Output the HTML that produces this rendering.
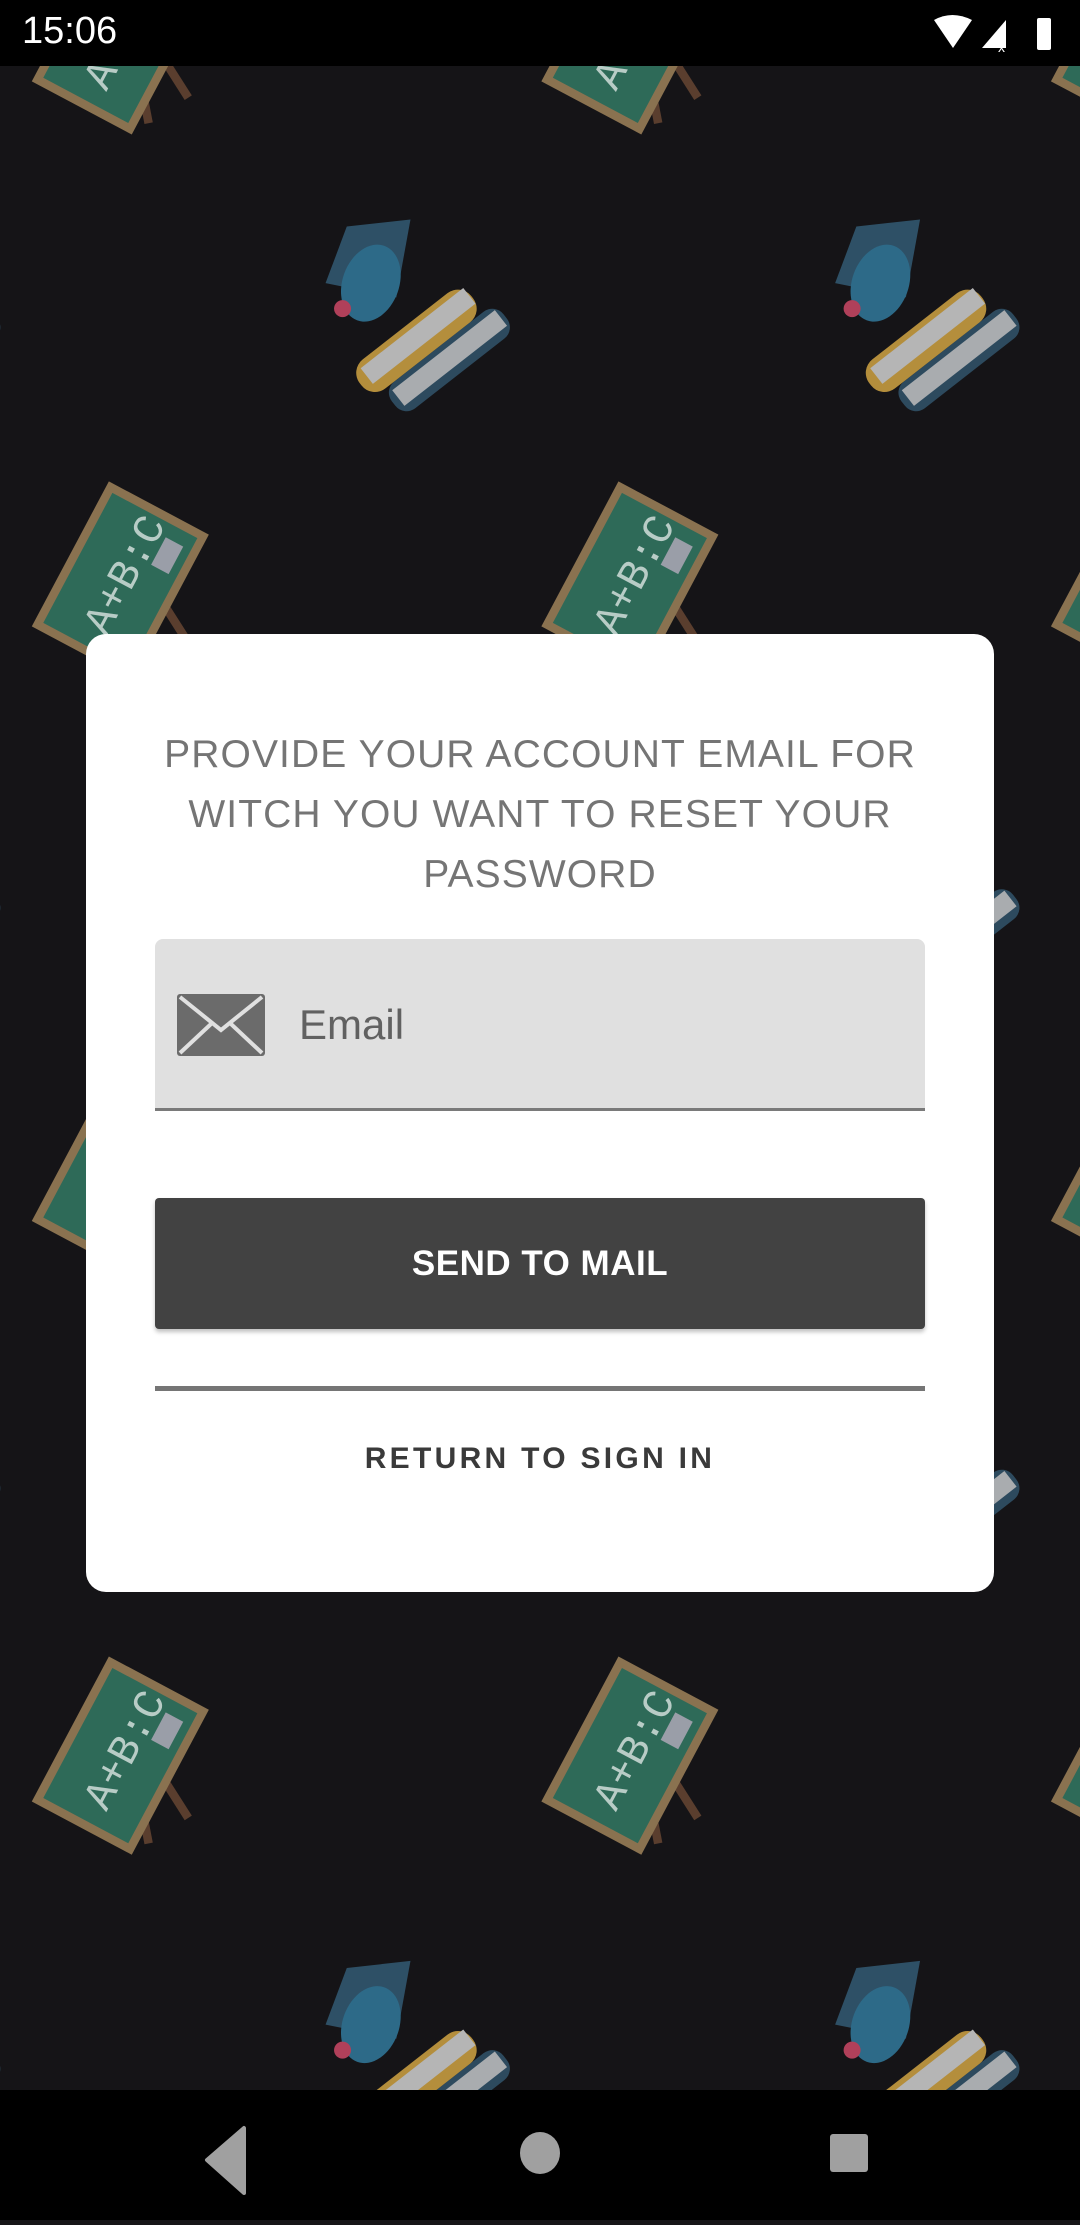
<!DOCTYPE html>
<html><head><meta charset="utf-8"><style>
html,body{margin:0;padding:0}
body{width:1080px;height:2220px;position:relative;overflow:hidden;background:#151417;font-family:"Liberation Sans",sans-serif}
#bg{position:absolute;left:0;top:0;width:1080px;height:2220px}
.sb{position:absolute;left:0;top:0;width:1080px;height:66px;background:#000;color:#fff}
.nb{position:absolute;left:0;top:2090px;width:1080px;height:130px;background:#000}
.card{position:absolute;left:86px;top:634px;width:908px;height:958px;background:#fff;border-radius:20px}
.title{position:absolute;left:0;top:91px;width:908px;text-align:center;color:#757575;font-size:39px;line-height:60px;letter-spacing:1.1px}
.inp{position:absolute;left:69px;top:305px;width:770px;height:172px;background:#e0e0e0;border-radius:8px 8px 0 0;border-bottom:3px solid #7a7a7a;box-sizing:border-box}
.inp span{position:absolute;left:144px;top:62px;font-size:42px;color:#616161}
.btn{position:absolute;left:69px;top:564px;width:770px;height:131px;background:#424242;border-radius:4px;box-shadow:0 3px 4px rgba(0,0,0,.25);color:#fff;font-weight:bold;font-size:35px;text-align:center;line-height:131px;letter-spacing:0.5px}
.div{position:absolute;left:69px;top:752px;width:770px;height:5px;background:#757575}
.ret{position:absolute;left:0;top:808px;width:908px;text-align:center;font-size:30px;font-weight:bold;letter-spacing:3.3px;color:#3a3a3a}
</style></head><body>
<svg id="bg" viewBox="0 0 763 1568" preserveAspectRatio="none">
<defs>
<g id="cb">
 <line x1="10" y1="10" x2="20" y2="62" stroke="#5a3e2e" stroke-width="6"/>
 <line x1="20" y1="0" x2="48" y2="44" stroke="#5a3e2e" stroke-width="6"/>
 <g transform="rotate(-62)">
  <rect x="-58" y="-40" width="116" height="80" fill="#8a7250"/>
  <rect x="-52" y="-34" width="104" height="68" fill="#2e6a58"/>
  <text x="-40" y="10" fill="#b8ccc6" font-size="30" font-family="Liberation Mono,monospace">A+B:C</text>
  <rect x="20" y="14" width="22" height="14" fill="#9a9ea8"/>
 </g>
</g>
<g id="bk">
 <g transform="rotate(-38)">
  <rect x="-45" y="10" width="100" height="24" rx="10" fill="#2d4a5e"/>
  <rect x="-40" y="14" width="92" height="14" fill="#a9acaf"/>
  <rect x="-55" y="-16" width="100" height="26" rx="12" fill="#b48e3c"/>
  <rect x="-48" y="-12" width="92" height="14" fill="#b5b5b5"/>
 </g>
 <path d="M-70,-40 L-55,-80 L-10,-85 L-20,-30 Z" fill="#2e5066"/>
 <ellipse cx="-38" cy="-40" rx="20" ry="28" fill="#2d6a88" transform="rotate(20 -38 -40)"/>
 <circle cx="-58" cy="-22" r="6" fill="#b0405a"/>
</g>
</defs>
<g>
 <use href="#cb" x="85" y="25"/><use href="#cb" x="445" y="25"/><use href="#cb" x="805" y="25"/>
 <use href="#cb" x="85" y="410"/><use href="#cb" x="445" y="410"/><use href="#cb" x="805" y="410"/>
 <use href="#cb" x="85" y="830"/><use href="#cb" x="445" y="830"/><use href="#cb" x="805" y="830"/>
 <use href="#cb" x="85" y="1240"/><use href="#cb" x="445" y="1240"/><use href="#cb" x="805" y="1240"/>
 <use href="#bk" x="-60" y="240"/><use href="#bk" x="300" y="240"/><use href="#bk" x="660" y="240"/>
 <use href="#bk" x="-60" y="650"/><use href="#bk" x="300" y="650"/><use href="#bk" x="660" y="650"/>
 <use href="#bk" x="-60" y="1060"/><use href="#bk" x="300" y="1060"/><use href="#bk" x="660" y="1060"/>
 <use href="#bk" x="-60" y="1470"/><use href="#bk" x="300" y="1470"/><use href="#bk" x="660" y="1470"/>
</g>
</svg>
<div class="sb">
 <div style="position:absolute;left:22px;top:10px;font-size:38px">15:06</div>
 <svg style="position:absolute;left:930px;top:14px" width="140" height="40" viewBox="0 0 140 40">
  <path d="M4,6 Q22,-4 42,6 L23,34 Z" fill="#fff"/>
  <path d="M52,34 L76,6 L76,34 Z" fill="#fff"/>
  <text x="68" y="38" fill="#fff" font-size="14" font-family="Liberation Sans">x</text>
  <rect x="107" y="4" width="14" height="32" rx="2" fill="#fff"/>
 </svg>
</div>
<div class="card">
 <div class="title">PROVIDE YOUR ACCOUNT EMAIL FOR<br>WITCH YOU WANT TO RESET YOUR<br>PASSWORD</div>
 <div class="inp">
  <svg style="position:absolute;left:22px;top:55px" width="88" height="62" viewBox="0 0 88 62">
   <rect x="0" y="0" width="88" height="62" rx="3" fill="#6b6b6b"/>
   <path d="M3,3 L44,36 L85,3" fill="none" stroke="#e0e0e0" stroke-width="4"/>
   <path d="M3,59 L34,30 M85,59 L54,30" fill="none" stroke="#e0e0e0" stroke-width="4"/>
  </svg>
  <span>Email</span>
 </div>
 <div class="btn">SEND TO MAIL</div>
 <div class="div"></div>
 <div class="ret">RETURN TO SIGN IN</div>
</div>
<div class="nb">
 <svg width="1080" height="130" viewBox="0 0 1080 130">
  <path d="M244,38 L244,103 L207,70 Z" fill="#a0a0a0" stroke="#a0a0a0" stroke-width="4" stroke-linejoin="round"/>
  <ellipse cx="540" cy="63" rx="20" ry="21" fill="#a0a0a0"/>
  <rect x="830" y="44" width="38" height="38" rx="3" fill="#a0a0a0"/>
 </svg>
</div>
</body></html>
